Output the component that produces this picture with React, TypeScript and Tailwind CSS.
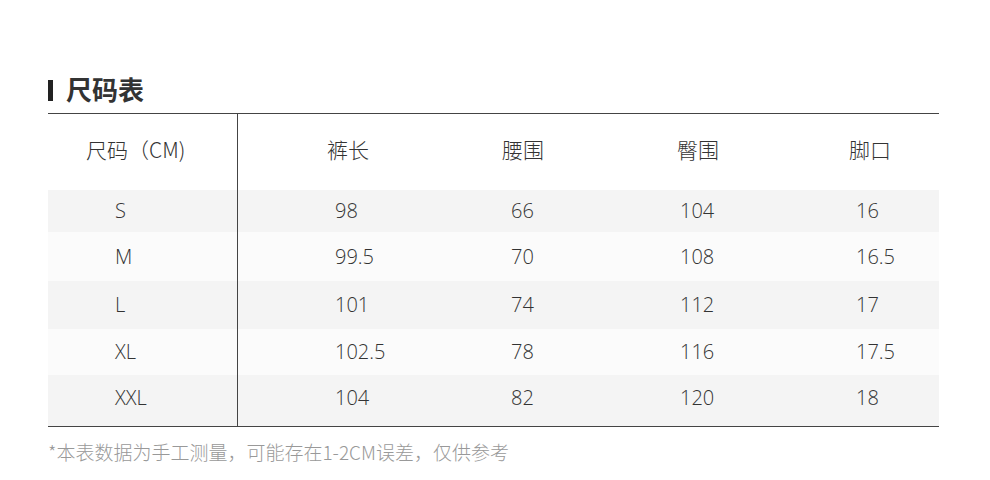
import React from "react";

const rows = [
  { size: "S", v: ["98", "66", "104", "16"], bg: "bg-[#f4f4f4]", h: "h-[42px]" },
  { size: "M", v: ["99.5", "70", "108", "16.5"], bg: "bg-[#fbfbfb]", h: "h-[49px]" },
  { size: "L", v: ["101", "74", "112", "17"], bg: "bg-[#f4f4f4]", h: "h-[48px]" },
  { size: "XL", v: ["102.5", "78", "116", "17.5"], bg: "bg-[#fbfbfb]", h: "h-[46px]" },
  { size: "XXL", v: ["104", "82", "120", "18"], bg: "bg-[#f4f4f4]", h: "h-[51px] pb-[5px]" },
];

const font = { fontFamily: '"Open Sans", "Noto Sans CJK SC", sans-serif' };
const cjk = { fontFamily: '"Noto Sans CJK SC", sans-serif' };

export default function App() {
  return (
    <div className="w-[990px] h-[480px] bg-white relative" style={font}>
      <div className="pt-[79px] pl-[48px] w-[939px]">
        <div className="flex items-center h-[22px]">
          <div className="w-[5px] h-[21px] bg-[#222]" />
          <div className="ml-[13px] text-[26px] font-bold text-[#333] leading-none -mt-[2px]" style={cjk}>
            尺码表
          </div>
        </div>
        <div className="mt-[12px] border-t border-b border-[#444] relative">
          <div className="absolute left-[189px] top-0 bottom-0 w-px bg-[#444]" />
          <div className="grid grid-cols-[189px_175px_175px_175px_177px] h-[76px] pb-[4px] items-center text-[21px] font-light text-[#333]">
            <div className="pl-[38px]" style={cjk}>尺码（CM)</div>
            <div className="pl-[90px]" style={cjk}>裤长</div>
            <div className="pl-[90px]" style={cjk}>腰围</div>
            <div className="pl-[90px]" style={cjk}>臀围</div>
            <div className="pl-[87px]" style={cjk}>脚口</div>
          </div>
          {rows.map((r) => (
            <div
              key={r.size}
              className={`grid grid-cols-[189px_175px_175px_175px_177px] items-center text-[20px] font-light text-[#333] ${r.bg} ${r.h}`}
            >
              <div className="pl-[67px]">{r.size}</div>
              <div className="pl-[98px]">{r.v[0]}</div>
              <div className="pl-[99px]">{r.v[1]}</div>
              <div className="pl-[93px]">{r.v[2]}</div>
              <div className="pl-[94px]">{r.v[3]}</div>
            </div>
          ))}
        </div>
        <div className="mt-[11px] text-[19px] text-[#999] font-light" style={cjk}>
          *本表数据为手工测量，可能存在1-2CM误差，仅供参考
        </div>
      </div>
    </div>
  );
}
